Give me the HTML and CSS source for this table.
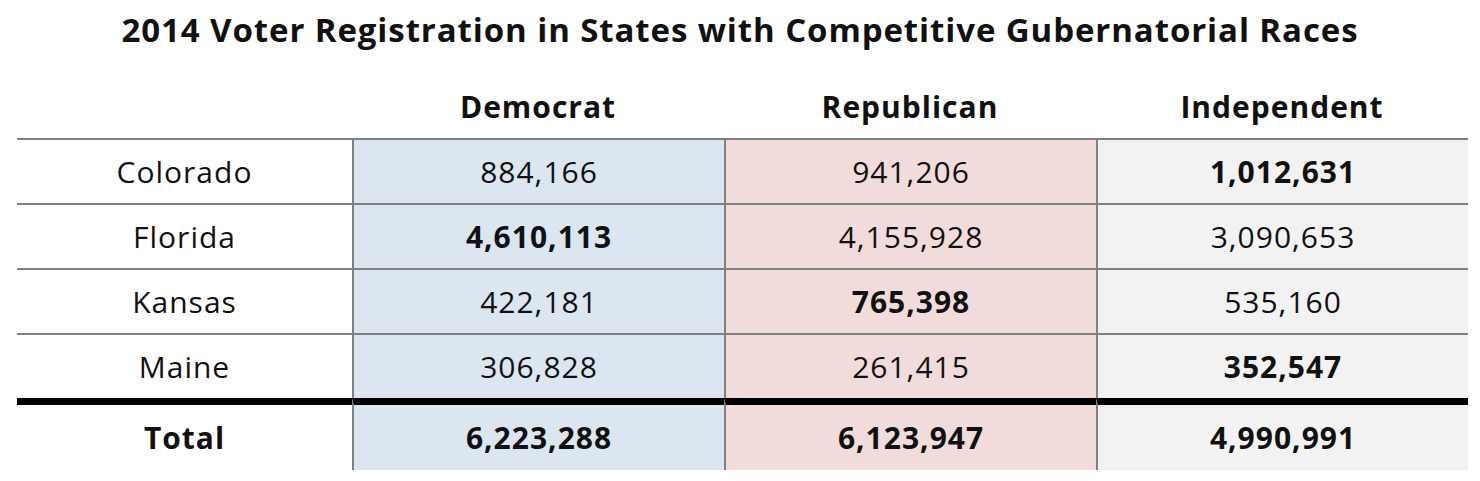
FILE: index.html
```html
<!DOCTYPE html>
<html>
<head>
<meta charset="utf-8">
<link rel="stylesheet" href="styles.css">
</head>
<body>
<h1 class="title">2014 Voter Registration in States with Competitive Gubernatorial Races</h1>
<table class="reg">
  <thead>
    <tr>
      <th class="state"></th>
      <th>Democrat</th>
      <th>Republican</th>
      <th>Independent</th>
    </tr>
  </thead>
  <tbody>
    <tr>
      <td class="state">Colorado</td>
      <td class="dem">884,166</td>
      <td class="rep">941,206</td>
      <td class="ind win">1,012,631</td>
    </tr>
    <tr>
      <td class="state">Florida</td>
      <td class="dem win">4,610,113</td>
      <td class="rep">4,155,928</td>
      <td class="ind">3,090,653</td>
    </tr>
    <tr>
      <td class="state">Kansas</td>
      <td class="dem">422,181</td>
      <td class="rep win">765,398</td>
      <td class="ind">535,160</td>
    </tr>
    <tr>
      <td class="state">Maine</td>
      <td class="dem">306,828</td>
      <td class="rep">261,415</td>
      <td class="ind win">352,547</td>
    </tr>
    <tr class="total">
      <td class="state">Total</td>
      <td class="dem">6,223,288</td>
      <td class="rep">6,123,947</td>
      <td class="ind">4,990,991</td>
    </tr>
  </tbody>
</table>
</body>
</html>
```

FILE: styles.css
```css
html, body {
  margin: 0;
  padding: 0;
  background: #ffffff;
}

body {
  font-family: "Open Sans", "Liberation Sans", sans-serif;
  color: #111111;
}

.title {
  margin: 0;
  height: 64px;
  line-height: 60px;
  text-align: center;
  font-size: 33px;
  font-weight: 700;
  letter-spacing: 0.9px;
  color: #111111;
}

.reg {
  margin-left: 17px;
  width: 1451px;
  border-collapse: separate;
  border-spacing: 0;
  table-layout: fixed;
}

.reg th,
.reg td {
  padding: 0;
  text-align: center;
  font-size: 30px;
  letter-spacing: 1px;
}

.reg th {
  height: 64px;
  padding-top: 10px;
  font-weight: 700;
  vertical-align: middle;
}

.reg th.state { width: 335px; }

.reg td {
  height: 63px;
  border-top: 2px solid #808080;
  font-weight: 400;
}

.reg td.dem,
.reg td.rep,
.reg td.ind {
  border-left: 2px solid #808080;
}

.reg td.dem { background: #dce6f1; }
.reg td.rep { background: #f2dcdb; }
.reg td.ind { background: #f2f2f2; }

.reg td.win { font-weight: 700; }

.reg tr.total td {
  border-top: 7px solid #000000;
  height: 65px;
  font-weight: 700;
}
```
